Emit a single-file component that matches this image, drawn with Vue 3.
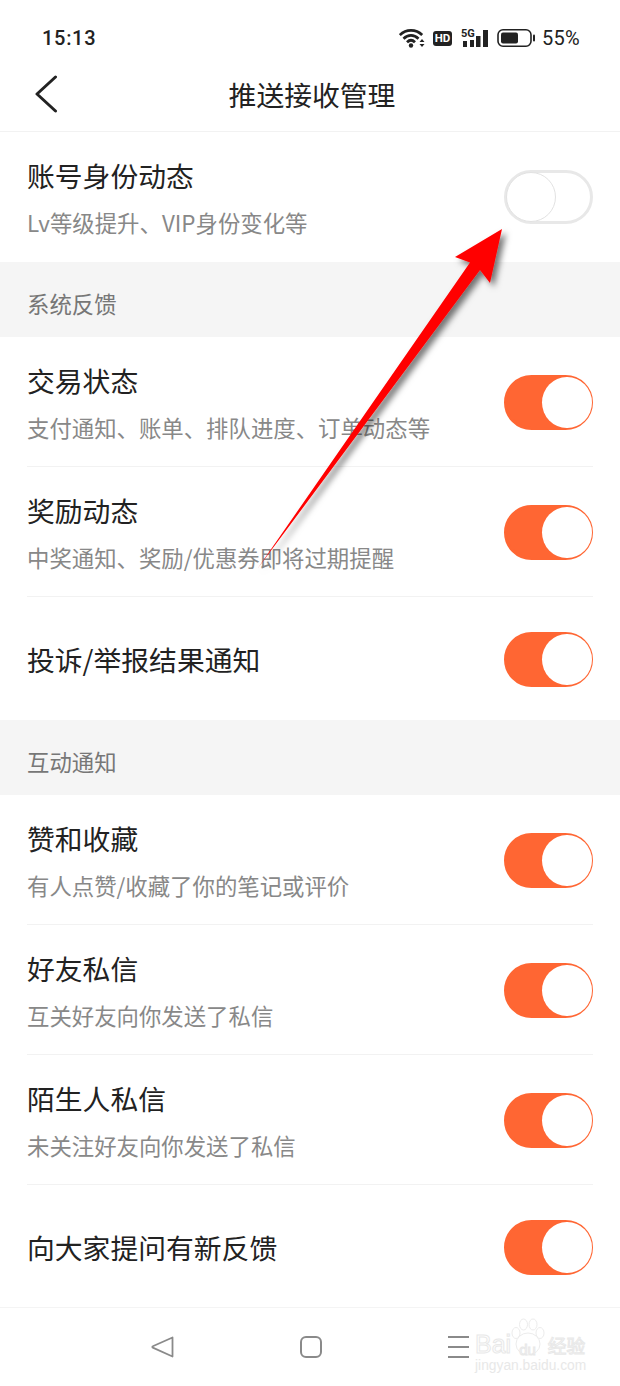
<template>
  <div class="page">
    <div class="status-bar">
      <span class="time">15:13</span>
      <div class="status-icons">
        <svg class="ic-wifi" width="27" height="20" viewBox="0 0 27 20">
          <path d="M.8 7C7 .8 17 .8 23.200 7M4.500 10.700C9 6.300 15 6.300 19.500 10.700M8 14.200C10.500 11.700 13.500 11.700 16 14.200" fill="none" stroke="#222" stroke-width="2.700" />
          <circle cx="12" cy="17.500" r="2.200" fill="#222" />
          <path d="M20.500 14h5l-2.500-3zM20.500 16h5l-2.500 3z" fill="#222" />
        </svg>
        <span class="hd">HD</span>
        <div class="signal">
          <span class="five-g">5G</span>
          <svg width="28" height="18" viewBox="0 0 28 18">
            <rect x="2" y="12" width="4" height="6" fill="#222" />
            <rect x="9" y="11" width="4" height="7" fill="#222" />
            <rect x="15" y="7" width="4.500" height="11" fill="#222" />
            <rect x="22" y="1" width="5" height="17" fill="#222" />
          </svg>
        </div>
        <svg width="39" height="18" viewBox="0 0 39 18">
          <rect x="1" y=".8" width="33" height="16.400" rx="5" fill="none" stroke="#222" stroke-width="1.600" />
          <rect x="4" y="3.500" width="17" height="11" rx="2" fill="#222" />
          <rect x="36" y="5.500" width="2" height="7" rx="1" fill="#222" />
        </svg>
        <span class="pct">55%</span>
      </div>
    </div>

    <header class="nav-header">
      <svg class="back" width="24" height="38" viewBox="0 0 24 38">
        <path d="M21.500 2L3 19l18.500 17" fill="none" stroke="#222" stroke-width="3" stroke-linecap="round" stroke-linejoin="round" />
      </svg>
      <h1>推送接收管理</h1>
    </header>

    <div v-for="group in groups" :key="group.name" class="group">
      <div v-if="group.name" class="section-title">{{ group.name }}</div>
      <div
        v-for="item in group.items"
        :key="item.title"
        class="row"
        :class="{ single: !item.sub }"
      >
        <div class="row-text">
          <div class="row-title">{{ item.title }}</div>
          <div v-if="item.sub" class="row-sub">{{ item.sub }}</div>
        </div>
        <div class="toggle" :class="{ on: item.on }"><span class="knob"></span></div>
      </div>
    </div>

    <div class="bottom-nav">
      <svg width="24" height="24" viewBox="0 0 24 24">
        <path d="M22.500 2.500L2.800 11.300a.7.7 0 0 0 0 1.300l19.700 8.900z" fill="none" stroke="#8a8a8a" stroke-width="1.800" stroke-linejoin="round" />
      </svg>
      <svg width="24" height="24" viewBox="0 0 24 24">
        <rect x="2" y="2" width="20" height="20" rx="5" fill="none" stroke="#8a8a8a" stroke-width="2" />
      </svg>
      <svg width="24" height="24" viewBox="0 0 24 24">
        <path d="M1 2h21M1 12h21M1 22h21" stroke="#8a8a8a" stroke-width="2" />
      </svg>
      <div class="watermark">
        <svg class="paw" width="34" height="38" viewBox="0 0 34 38">
          <g fill="#fff" stroke="#ececec" stroke-width="1">
            <ellipse cx="5" cy="15" rx="4" ry="5.500" />
            <ellipse cx="12.500" cy="6.500" rx="4" ry="5.500" />
            <ellipse cx="22" cy="6.500" rx="4" ry="5.500" />
            <ellipse cx="29" cy="15" rx="4" ry="5.500" />
            <ellipse cx="17" cy="26" rx="12" ry="11" />
          </g>
        </svg>
        <div class="wm-main"><span>Bai</span><span class="wm-du">du</span><span class="wm-cn">经验</span></div>
        <div class="wm-url">jingyan.baidu.com</div>
      </div>
    </div>

    <svg class="arrow" width="620" height="1386" viewBox="0 0 620 1386">
      <defs>
        <filter id="arrow-shadow" x="-20%" y="-20%" width="150%" height="150%">
          <feDropShadow dx="4" dy="4" stdDeviation="3" flood-color="#000" flood-opacity="0.55" />
        </filter>
      </defs>
      <path
        d="M502 229L455 257L470 262.500L258 568L480 270L490 283Z"
        fill="#ff0000"
        filter="url(#arrow-shadow)"
      />
    </svg>
  </div>
</template>

<script setup>
const groups = [
  {
    name: '',
    items: [{ title: '账号身份动态', sub: 'Lv等级提升、VIP身份变化等', on: false }],
  },
  {
    name: '系统反馈',
    items: [
      { title: '交易状态', sub: '支付通知、账单、排队进度、订单动态等', on: true },
      { title: '奖励动态', sub: '中奖通知、奖励/优惠券即将过期提醒', on: true },
      { title: '投诉/举报结果通知', sub: '', on: true },
    ],
  },
  {
    name: '互动通知',
    items: [
      { title: '赞和收藏', sub: '有人点赞/收藏了你的笔记或评价', on: true },
      { title: '好友私信', sub: '互关好友向你发送了私信', on: true },
      { title: '陌生人私信', sub: '未关注好友向你发送了私信', on: true },
      { title: '向大家提问有新反馈', sub: '', on: true },
    ],
  },
]
</script>

<style>
html,
body {
  margin: 0;
  background: #fff;
}
</style>

<style scoped>
.page {
  position: relative;
  width: 620px;
  height: 1386px;
  overflow: hidden;
  background: #fff;
  font-family: "Noto Sans CJK SC", "Liberation Sans", sans-serif;
  color: #222;
}

.status-bar {
  height: 62px;
  padding: 13px 40px 0 42px;
  box-sizing: border-box;
  display: flex;
  align-items: center;
  justify-content: space-between;
  font-family: Roboto, "Liberation Sans", sans-serif;
}

.time {
  font-size: 20px;
  font-weight: 500;
  letter-spacing: 0.7px;
}

.status-icons {
  display: flex;
  align-items: center;
}

.ic-wifi {
  margin-right: 7px;
}

.hd {
  width: 19px;
  height: 15px;
  border-radius: 3px;
  background: #222;
  color: #fff;
  font-size: 11.500px;
  font-weight: 700;
  line-height: 15px;
  text-align: center;
  margin: 2px 9px 0 0;
}

.signal {
  position: relative;
  width: 28px;
  height: 18px;
  margin-right: 8px;
}

.five-g {
  position: absolute;
  left: 0;
  top: -1px;
  font-size: 11px;
  font-weight: 700;
  line-height: 11px;
}

.pct {
  margin-left: 6px;
  font-size: 20px;
  letter-spacing: 0.3px;
}

.nav-header {
  height: 70px;
  box-sizing: border-box;
  border-bottom: 1px solid #f2f2f2;
  padding: 0 0 6px 4px;
  display: flex;
  align-items: center;
  justify-content: center;
  position: relative;
}

.back {
  position: absolute;
  left: 34px;
  top: 13px;
}

h1 {
  margin: 0;
  font-size: 27.800px;
  font-weight: 400;
  line-height: 40px;
}

.section-title {
  height: 75px;
  padding: 7px 27px 0;
  box-sizing: border-box;
  display: flex;
  align-items: center;
  background: #f5f5f5;
  color: #777;
  font-size: 22.400px;
}

.row {
  height: 130px;
  margin: 0 27px;
  padding-top: 2px;
  box-sizing: border-box;
  display: flex;
  align-items: center;
  justify-content: space-between;
  border-bottom: 1px solid #f2f2f2;
}

.row:last-child {
  border-bottom: 0;
}

.row.single {
  height: 123px;
}

.row-text {
  margin-bottom: 2px;
}

.row-title {
  font-size: 27.800px;
  line-height: 36px;
  color: #222;
}

.row-sub {
  margin-top: 14px;
  font-size: 22.400px;
  line-height: 30px;
  color: #888;
}

.toggle {
  position: relative;
  width: 89px;
  height: 54px;
  margin-bottom: 2px;
  box-sizing: border-box;
  border-radius: 28px;
  border: 3px solid #e8e8e8;
  background: #fff;
  flex-shrink: 0;
}

.toggle.on {
  height: 55px;
  margin-bottom: 0;
  background: #ff6633;
  border-color: #ff6633;
}

.knob {
  position: absolute;
  left: -1px;
  top: -1px;
  width: 50px;
  height: 50px;
  box-sizing: border-box;
  border-radius: 50%;
  border: 1px solid #e2e2e2;
  background: #fff;
}

.toggle.on .knob {
  left: 35px;
  top: -1px;
  width: 49.500px;
  height: 51px;
  border: 0;
}

.bottom-nav {
  position: absolute;
  left: 0;
  right: 0;
  bottom: 0;
  height: 79px;
  box-sizing: border-box;
  border-top: 1px solid #f4f4f4;
  background: #fff;
  padding: 0 149px 0 150px;
  display: flex;
  align-items: center;
  justify-content: space-between;
}

.watermark {
  position: absolute;
  left: 475px;
  top: 10px;
  width: 112px;
  color: #fff;
}

.paw {
  position: absolute;
  left: 36px;
  top: 0;
}

.wm-main {
  position: absolute;
  left: 0;
  top: 13px;
  white-space: nowrap;
  font-family: "Liberation Sans", "Noto Sans CJK SC", sans-serif;
  font-size: 25px;
  line-height: 26px;
  -webkit-text-stroke: 1px #e8e8e8;
}

.wm-du {
  position: relative;
  top: 2px;
  font-size: 15px;
  margin: 0 12px 0 8px;
}

.wm-cn {
  font-size: 18.700px;
}

.wm-url {
  position: absolute;
  left: 0;
  top: 41px;
  white-space: nowrap;
  font-family: "Liberation Sans", sans-serif;
  font-size: 13.800px;
  line-height: 14px;
  color: #e8e8e8;
}

.arrow {
  position: absolute;
  left: 0;
  top: 0;
  pointer-events: none;
}
</style>
